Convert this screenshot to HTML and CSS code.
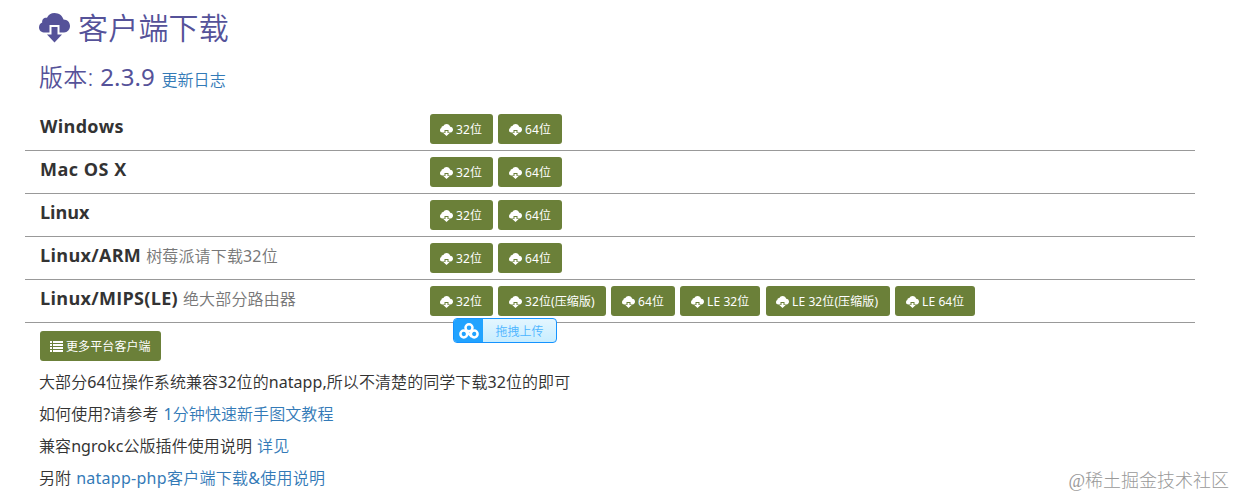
FILE: index.html
```html
<!DOCTYPE html>
<html lang="zh-CN">
	<head>
		<meta charset="UTF-8" />
		<meta name="viewport" content="width=device-width, initial-scale=1.0" />
		<title>客户端下载</title>
		<link rel="stylesheet" href="styles.css">
	</head>
	<body>
		<svg class="sprite" aria-hidden="true">
			<symbol id="icon-cloud" viewBox="0 0 31 30">
				<path d="M6 19.5C2.500 19.500 0 17.500 0 14.500C0 12 1.300 10.300 3.200 9.500C2.800 6.500 5 4.300 8 4.800C9.300 1.800 12 0 15.500 0C20 0 23.500 2.800 24.500 6.500C28.200 6.500 31 9.300 31 13C31 16.500 28.500 19.500 25 19.500H20.500V12H10.500V19.500Z" />
				<path d="M12.500 14H18.500V21.500H23L15.500 29.500L8 21.500H12.500Z" />
			</symbol>
			<symbol id="icon-cloud-small" viewBox="0 0 13 12">
				<path d="M2.500 8.500C1 8.500 0 7.500 0 6.200C0 5.100 .6 4.400 1.400 4C1.300 2.700 2.200 1.900 3.400 2C4 .8 5.100 0 6.500 0C8.400 0 9.800 1.200 10.200 2.800C11.800 2.800 13 4 13 5.600C13 7.200 12 8.500 10.500 8.500H8.500V6H4.500V8.500Z" />
				<path d="M5.500 7H7.500V9H9.700L6.500 12L3.300 9H5.500Z" />
			</symbol>
			<symbol id="icon-list" viewBox="0 0 13 11">
				<path d="M0 0h2v2H0zM3 0h10v2H3zM0 3h2v2H0zM3 3h10v2H3zM0 6h2v2H0zM3 6h10v2H3zM0 9h2v2H0zM3 9h10v2H3z" />
			</symbol>
		</svg>

		<div class="container">
			<h2><svg class="title-icon"><use href="#icon-cloud" /></svg><span>客户端下载</span></h2>
			<h3>版本: <span class="version">2.3.9</span> <a class="changelog" href="#">更新日志</a></h3>

			<div class="row">
				<h4>Windows</h4>
				<div class="downloads">
					<a class="btn" href="#"><svg><use href="#icon-cloud-small" /></svg><span>32位</span></a>
					<a class="btn btn-64" href="#"><svg><use href="#icon-cloud-small" /></svg><span>64位</span></a>
				</div>
			</div>
			<div class="row">
				<h4 class="mac">Mac OS X</h4>
				<div class="downloads">
					<a class="btn" href="#"><svg><use href="#icon-cloud-small" /></svg><span>32位</span></a>
					<a class="btn btn-64" href="#"><svg><use href="#icon-cloud-small" /></svg><span>64位</span></a>
				</div>
			</div>
			<div class="row">
				<h4 class="linux">Linux</h4>
				<div class="downloads">
					<a class="btn" href="#"><svg><use href="#icon-cloud-small" /></svg><span>32位</span></a>
					<a class="btn btn-64" href="#"><svg><use href="#icon-cloud-small" /></svg><span>64位</span></a>
				</div>
			</div>
			<div class="row">
				<h4>Linux/ARM <small>树莓派请下载32位</small></h4>
				<div class="downloads">
					<a class="btn" href="#"><svg><use href="#icon-cloud-small" /></svg><span>32位</span></a>
					<a class="btn btn-64" href="#"><svg><use href="#icon-cloud-small" /></svg><span>64位</span></a>
				</div>
			</div>
			<div class="row">
				<h4>Linux/MIPS(LE) <small>绝大部分路由器</small></h4>
				<div class="downloads">
					<a class="btn" href="#"><svg><use href="#icon-cloud-small" /></svg><span>32位</span></a>
					<a class="btn btn-zip" href="#"><svg><use href="#icon-cloud-small" /></svg><span>32位(压缩版)</span></a>
					<a class="btn btn-64" href="#"><svg><use href="#icon-cloud-small" /></svg><span>64位</span></a>
					<a class="btn btn-le" href="#"><svg><use href="#icon-cloud-small" /></svg><span>LE 32位</span></a>
					<a class="btn btn-le-zip" href="#"><svg><use href="#icon-cloud-small" /></svg><span>LE 32位(压缩版)</span></a>
					<a class="btn btn-le" href="#"><svg><use href="#icon-cloud-small" /></svg><span>LE 64位</span></a>
				</div>
				<div class="upload">
					<span class="upload-logo">
						<svg viewBox="0 0 20 16">
							<circle cx="10" cy="4.800" r="3.500" />
							<circle cx="4.800" cy="11" r="3.400" />
							<circle cx="15.200" cy="11" r="3.400" />
							<path d="M7 8.200L12.700 13.600M13 8.200L11.500 9.800" />
						</svg>
					</span>
					<span class="upload-text">拖拽上传</span>
				</div>
			</div>

			<a class="btn btn-more" href="#"><svg><use href="#icon-list" /></svg><span>更多平台客户端</span></a>
			<div class="notes">
				<p>大部分64位操作系统兼容32位的natapp,所以不清楚的同学下载32位的即可</p>
				<p>如何使用?请参考 <a href="#">1分钟快速新手图文教程</a></p>
				<p>兼容ngrokc公版插件使用说明 <a href="#">详见</a></p>
				<p>另附 <a class="php-link" href="#">natapp-php客户端下载&amp;使用说明</a></p>
			</div>
		</div>
		<div class="watermark">@稀土掘金技术社区</div>
	</body>
</html>
```

FILE: styles.css
```css
* {
	box-sizing: border-box;
}
body {
	margin: 0;
	height: 497px;
	overflow: hidden;
	position: relative;
	font-family: 'Noto Sans', 'Noto Sans CJK SC DemiLight', 'Noto Sans CJK SC', sans-serif;
	font-size: 16px;
	font-weight: 400;
	line-height: 32px;
	color: #333;
	background-color: #fff;
}
a {
	color: #337ab7;
	text-decoration: none;
}
.sprite {
	display: none;
}
.container {
	width: 1170px;
	margin-left: 25px;
	padding-top: 8px;
}
h2,
h3 {
	margin: 0;
	padding-left: 14px;
	font-weight: 350;
	color: #555299;
}
h2 {
	display: flex;
	align-items: center;
	gap: 8px;
	height: 40px;
	font-size: 30px;
	letter-spacing: 0.2px;
}
.title-icon {
	width: 31px;
	height: 30px;
	fill: #555299;
}
h3 {
	height: 60px;
	padding-top: 13px;
	font-size: 24px;
	letter-spacing: 0.3px;
}
.version {
	font-weight: 380;
	letter-spacing: 0.1px;
}
.changelog {
	font-size: 16px;
	letter-spacing: 0.1px;
}
.row {
	position: relative;
	display: flex;
	height: 43px;
	padding: 6px 15px;
	border-bottom: 1px solid #999;
}
h4 {
	width: 390px;
	margin: 0;
	font-family: 'Open Sans', 'Noto Sans CJK SC', sans-serif;
	font-size: 18px;
	font-weight: 700;
	line-height: 24px;
	letter-spacing: 0.3px;
}
.mac {
	letter-spacing: 0.5px;
}
.linux {
	letter-spacing: -0.1px;
}
h4 small {
	font-family: 'Noto Sans', 'Noto Sans CJK SC DemiLight', 'Noto Sans CJK SC', sans-serif;
	font-size: 16px;
	font-weight: 400;
	letter-spacing: 0.15px;
	color: #777;
}
.downloads {
	display: flex;
	gap: 5px;
}
.btn {
	display: flex;
	align-items: center;
	gap: 3px;
	width: 63px;
	height: 30px;
	padding-left: 10px;
	border-radius: 3px;
	font-family: 'Noto Sans', 'Noto Sans CJK SC', sans-serif;
	font-size: 12px;
	line-height: 18px;
	letter-spacing: 0.1px;
	white-space: nowrap;
	color: #fff;
	background-color: #6b8039;
}
.btn svg {
	width: 13px;
	height: 12px;
	margin-top: 2px;
	fill: #fff;
}
.btn span {
	padding-top: 2px;
}
.btn-64 {
	width: 64px;
	padding-left: 11px;
}
.btn-zip {
	width: 108px;
	padding-left: 11px;
}
.btn-le {
	width: 80px;
	padding-left: 11px;
}
.btn-le-zip {
	width: 124px;
	margin-left: 1px;
}
.btn-more {
	width: 121px;
	margin: 8px 0 0 15px;
}
.btn-more svg {
	height: 11px;
	margin-top: 1px;
}
.upload {
	position: absolute;
	left: 428px;
	top: 38px;
	display: flex;
	width: 104px;
	height: 25px;
	border: 1px solid #1593ff;
	border-radius: 4px;
	overflow: hidden;
	background: linear-gradient(#e4f6ff, #c8edff);
}
.upload-logo {
	display: flex;
	align-items: center;
	justify-content: center;
	width: 29px;
	background-color: #22a3ff;
}
.upload-logo svg {
	width: 20px;
	height: 16px;
	fill: none;
	stroke: #fff;
	stroke-width: 2.5;
}
.upload-text {
	flex: 1;
	text-align: center;
	font-size: 12px;
	line-height: 25px;
	color: #4db5ff;
}
.notes {
	padding: 5px 14px 0;
}
.notes p {
	margin: 0;
	letter-spacing: 0.07px;
	word-spacing: 0.8px;
}
.notes .php-link {
	letter-spacing: 0.27px;
}
.watermark {
	position: absolute;
	right: 6px;
	bottom: 0;
	font-family: 'Liberation Serif', 'Noto Sans CJK SC', serif;
	font-size: 18px;
	font-weight: 300;
	color: #999;
}
```
